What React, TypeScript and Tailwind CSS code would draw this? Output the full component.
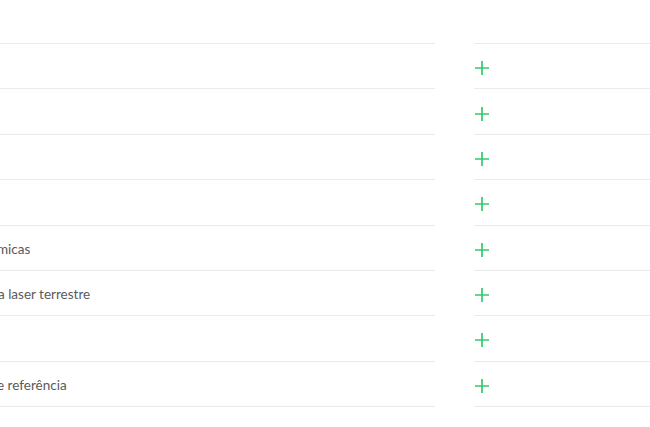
const rows = [
  { label: "" },
  { label: "" },
  { label: "" },
  { label: "" },
  { label: "micas", indent: "-ml-[3px]" },
  { label: "a laser terrestre", indent: "-ml-[2px]" },
  { label: "" },
  { label: "e referência", indent: "-ml-[3px]" },
];

function PlusIcon() {
  return (
    <svg width="16" height="16" viewBox="0 0 16 16" className="text-[#2fcc6e]">
      <path d="M8 1v14M1 8h14" stroke="currentColor" strokeWidth="1.7" fill="none" />
    </svg>
  );
}

export default function App() {
  return (
    <div className="w-[650px] h-[427px] overflow-hidden bg-white font-['Lato',sans-serif]">
      <div className="h-[43px]" />
      <div className="flex gap-[39px]">
        <div className="w-[435px] shrink-0 border-t border-[#ebebeb]">
          {rows.map((row, i) => (
            <div
              key={i}
              className="h-[45.375px] flex items-center pt-[3px] border-b border-[#ebebeb] text-[13.5px] text-[#595959] whitespace-nowrap overflow-hidden"
            >
              <span className={row.indent}>{row.label}</span>
            </div>
          ))}
        </div>
        <div className="flex-1 shrink-0 min-w-[200px] border-t border-[#ebebeb]">
          {rows.map((_, i) => (
            <div key={i} className="h-[45.375px] flex items-center pt-[4px] border-b border-[#ebebeb]">
              <PlusIcon />
            </div>
          ))}
        </div>
      </div>
    </div>
  );
}
